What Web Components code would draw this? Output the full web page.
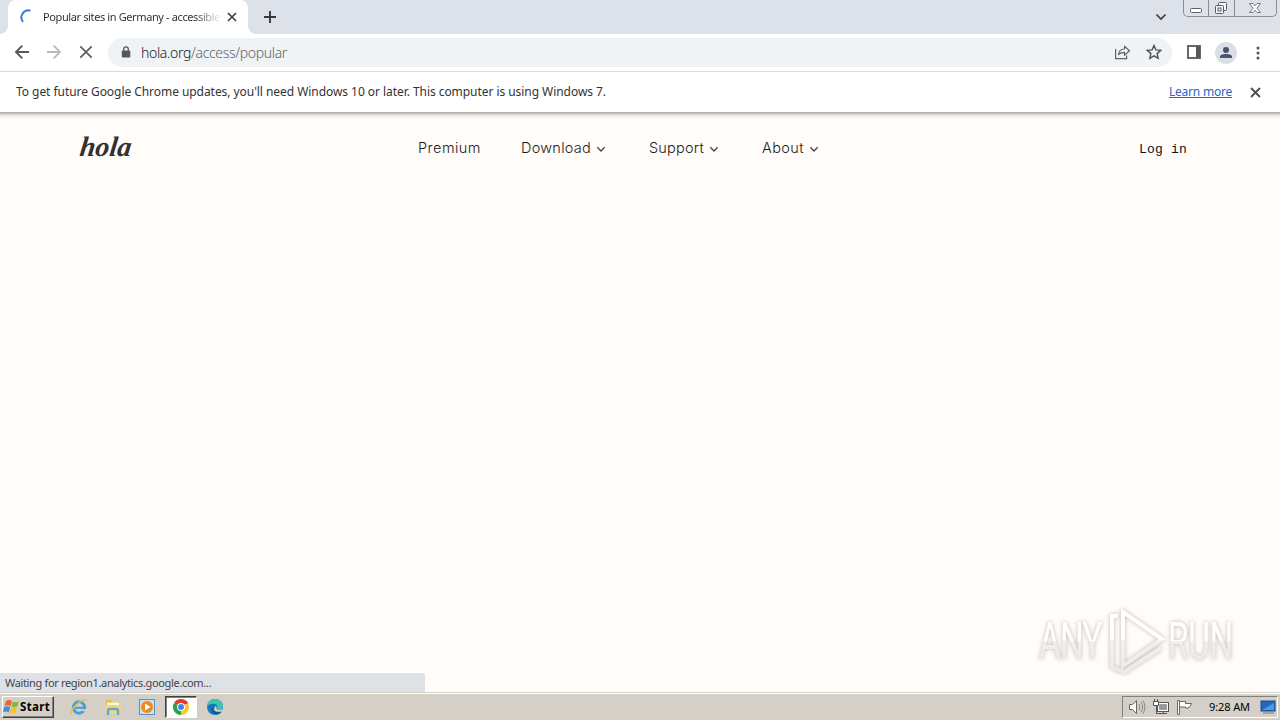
<!DOCTYPE html>
<html lang="en">
<head>
<meta charset="utf-8">
<title>Popular sites in Germany - accessible</title>
<style>
html,body{margin:0;width:1280px;height:720px;overflow:hidden}
body{font-family:"Noto Sans","Liberation Sans",sans-serif;color:#333}
</style>
</head>
<body>
<desktop-screen></desktop-screen>
<script>
const define = (name, html, after) => {
  const t = document.createElement('template');
  t.innerHTML = html;
  customElements.define(name, class extends HTMLElement {
    connectedCallback() {
      if (this.shadowRoot) return;
      this.attachShadow({mode: 'open'}).append(t.content.cloneNode(true));
      if (after) after(this, this.shadowRoot);
    }
  });
};

/* One line of text, tracked so that it fills the width given in "w". */
define('fit-text', `<style>:host{display:block;white-space:nowrap;flex:none}span{display:inline-block;white-space:pre;text-decoration:var(--line,none)}</style><span><slot></slot></span>`, (el, root) => {
  const s = root.querySelector('span');
  const target = +el.getAttribute('w');
  el.style.width = target + 'px';
  s.style.letterSpacing = (target - s.getBoundingClientRect().width) / el.textContent.length + 'px';
});

define('browser-tab', `<style>
:host{display:flex;align-items:center;box-sizing:border-box;width:240px;height:34px;background:#fff;border-radius:8px 8px 0 0;padding:0 9px 0 12px;position:relative}
:host::before,:host::after{content:"";position:absolute;bottom:0;width:8px;height:8px}
:host::before{left:-8px;background:radial-gradient(circle at 0 0,transparent 7.5px,#fff 8px)}
:host::after{right:-8px;background:radial-gradient(circle at 100% 0,transparent 7.5px,#fff 8px)}
svg{flex:none}
.title{width:177px;margin-left:7px;margin-right:7px;overflow:hidden;font-size:11px;line-height:16px;-webkit-mask:linear-gradient(90deg,#000 152px,transparent 178px)}
</style>
<svg width="16" height="16" fill="none" stroke="#3f7bd4" stroke-width="2"><path d="M10.5 1.7A7 7 0 0 0 3 12.8"/></svg>
<div class="title"><slot></slot></div>
<svg width="10" height="10" stroke="#3c4043" stroke-width="1.7"><path d="M1 1l8 8M9 1l-8 8"/></svg>`);

define('window-controls', `<style>
:host{display:flex;width:94px;height:17px;box-sizing:border-box;border:1px solid #8b8e93;border-top:0;border-radius:0 0 5px 5px;margin-right:3px}
div{border-right:1px solid #8b8e93;display:flex;justify-content:center}
div:nth-child(2){width:24px}div:nth-child(3){width:25px}div:nth-child(4){flex:1;border:0}
div:nth-child(n+3) svg{margin-right:2px}
</style>
<div><svg width="14" height="16" fill="#fff" stroke="#5d6168"><rect x="1.5" y="8.5" width="11" height="4" rx="1"/></svg></div>
<div><svg width="14" height="16" fill="#f5f6f8" stroke="#555960"><rect x="4.500" y="2.500" width="8" height="8" rx="1"/><rect x="1.500" y="5.500" width="8" height="8" rx="1"/><rect x="4" y="8" width="3" height="3"/></svg></div>
<div><svg width="14" height="16" fill="#fff" stroke="#666a70" stroke-width=".9"><path d="M1.500 3.500H5l2 2.200 2-2.200h3.500L9 8.200l3.500 4.300H9L7 10.300 5 12.500H1.500L5 8.200z"/></svg></div>`);

define('tab-strip', `<style>
:host{display:flex;height:34px;background:#dde1e9;padding-left:8px}
.plus{margin:10px 0 0 15px}.gap{flex:1}.chev{margin:13px 16px 0 0}
</style>
<browser-tab><fit-text w="177">Popular sites in Germany - accessible</fit-text></browser-tab>
<svg class="plus" width="14" height="14" stroke="#34373b" stroke-width="1.9"><path d="M7 1v12M1 7h12"/></svg>
<span class="gap"></span>
<svg class="chev" width="12" height="8" fill="none" stroke="#3c4043" stroke-width="1.7"><path d="M1.500 1.500L6 6l4.500-4.500"/></svg>
<window-controls></window-controls>`);

define('tool-bar', `<style>
:host{display:flex;height:37px;box-sizing:border-box;background:#fff;align-items:center;padding-left:14px}
svg{flex:none;display:block}
.n{margin-right:16px;position:relative;top:-.5px}
.omni{display:flex;align-items:center;width:1064px;height:29px;margin-left:-2px;box-sizing:border-box;background:#f0f3f6;border-radius:15px;padding:0 10px 0 12px}
.url{display:flex;margin-left:9px;font-size:14px;font-weight:300;color:#5f6368;line-height:20px}
.url :first-child{color:#202124}
.share{margin-left:auto;margin-right:15px}
.side{margin-left:15px}.me{width:22px;height:22px;border-radius:50%;background:#dadfe7;margin-left:14px}.more{margin-left:18px}
</style>
<svg class="n" width="16" height="16" fill="none" stroke="#55585d" stroke-width="1.9"><path d="M15 8H2M8.300 1.700L2 8l6.300 6.300"/></svg>
<svg class="n" width="16" height="16" fill="none" stroke="#b8babd" stroke-width="1.8"><path d="M1 8h13M7.700 1.700L14 8l-6.300 6.300"/></svg>
<svg class="n" width="16" height="16" stroke="#5a5d61" stroke-width="1.7"><path d="M2.300 2.300l11.400 11.400M13.700 2.300L2.300 13.700"/></svg>
<div class="omni">
<svg width="12" height="15" fill="#55585c"><rect x="1.800" y="5.500" width="8.500" height="7" rx="1"/><path d="M3.700 6.500V4.200a2.300 2.300 0 0 1 4.600 0v2.300" fill="none" stroke="#55585c" stroke-width="1.300"/></svg>
<div class="url"><fit-text w="50">hola.org</fit-text><fit-text w="96">/access/popular</fit-text></div>
<svg class="share" width="17" height="16" fill="none" stroke="#5f6368" stroke-width="1.200"><path d="M1.600 4v9.700h11V10.500"/><path d="M4.500 9.500c.4-3.500 2.500-5.400 6-5.500V1.200l5 4.600-5 4.500V7.400c-2.700 0-4.500.600-6 2.100z" stroke-linejoin="round"/></svg>
<svg width="16" height="17" fill="none" stroke="#4f5257" stroke-width="1.400"><path d="M8 1.500l1.900 4.400 4.900.5-3.700 3.200 1.100 4.700L8 11.800l-4.200 2.500 1.100-4.700L1.200 6.400l4.900-.5z"/></svg>
</div>
<svg class="side" width="14" height="15"><rect x="1" y="1" width="12" height="12" fill="none" stroke="#55585c" stroke-width="1.800"/><path d="M9 1h4v12H9z" fill="#55585c"/></svg>
<svg class="me" width="22" height="22" fill="#49536b"><circle cx="11" cy="8" r="3"/><path d="M5 16v-1.500c0-3.500 12-3.500 12 0V16z"/></svg>
<svg class="more" width="6" height="16" fill="#4f5257"><circle cx="3" cy="3" r="1.500"/><circle cx="3" cy="8" r="1.500"/><circle cx="3" cy="13" r="1.500"/></svg>`);

define('info-bar', `<style>
:host{display:flex;align-items:center;height:42px;box-sizing:border-box;background:#fff;border-top:1px solid #d9dbdd;border-bottom:1px solid #b2b2b2;padding:0 19px 1px 16px;font-size:12px;color:#333;position:relative}
:host::after{content:"";position:absolute;left:0;right:0;top:41px;height:6px;background:linear-gradient(#b5b4b2,#e7e5e2 35%,#fffcf900)}
.link{margin-left:auto;color:#2a66c4;--line:underline}
svg{margin:1px 0 0 18px}
</style>
<fit-text w="590">To get future Google Chrome updates, you'll need Windows 10 or later. This computer is using Windows 7.</fit-text>
<fit-text class="link" w="63">Learn more</fit-text>
<svg width="11" height="11" stroke="#4a4d51" stroke-width="1.800"><path d="M1 1l9 9M10 1l-9 9"/></svg>`);

define('nav-item', `<style>
:host{display:flex;align-items:center;font:300 14.5px/20px Inter,"Liberation Sans",sans-serif;color:#1c1c1c}
svg{margin:3px 0 0 5px}:host([plain]) svg{display:none}
</style><slot></slot><svg width="10" height="7" fill="none" stroke="#444" stroke-width="1.300"><path d="M1.300 1.300L5 5l3.700-3.700"/></svg>`);

define('any-run', `<style>
:host{position:absolute;left:1030px;top:485px;display:block}
svg{display:block;overflow:visible;filter:drop-shadow(0 0 2px rgba(90,82,72,.4))}
text{font:400 52px Roboto,sans-serif}
</style>
<svg width="212" height="84" viewBox="0 0 212 84">
<defs><linearGradient id="g" gradientUnits="userSpaceOnUse" x1="0" y1="14" x2="0" y2="72"><stop offset=".46" stop-color="#fff"/><stop offset=".48" stop-color="#f3f0ec"/><stop offset="1" stop-color="#eeebe7"/></linearGradient></defs>
<text transform="translate(9 61) scale(.64 1)" y="0" fill="url(#h)" textLength="99">ANY</text>
<text transform="translate(138 61) scale(.64 1)" y="0" fill="url(#h)" textLength="102">RUN</text>
<linearGradient id="h" gradientUnits="userSpaceOnUse" x1="0" y1="-37" x2="0" y2="0"><stop offset=".5" stop-color="#fff"/><stop offset=".53" stop-color="#f3f0ec"/><stop offset="1" stop-color="#eeebe7"/></linearGradient>
<path d="M93 13L132 40 93 67z M88 17H82V68L94 73 131 49" transform="translate(0 1)" fill="none" stroke="url(#g)" stroke-width="4"/>
</svg>`);

define('web-page', `<style>
:host{display:block;flex:1;background:#fffcf9;position:relative;min-height:0}
header{display:flex;align-items:center;height:69px;padding-left:80px}
.logo{font:italic bold 28px/34px "Liberation Serif",serif;color:#35302e;margin:-2px -3px 0 0;transform:skewX(-7deg)}
nav{display:flex;margin-left:285px;margin-top:1px}
nav nav-item{margin-right:40px}
nav nav-item:nth-child(2),nav nav-item:nth-child(3){margin-right:43px}
.login{font:13px/18px "Liberation Mono",monospace;color:#111;margin-left:280px;margin-top:5px}
.status{position:absolute;left:0;bottom:0;width:425px;height:19px;box-sizing:border-box;background:#dee1e6;border-radius:0 3px 0 0;padding-left:5px;font-size:11px;line-height:20px;color:#444}
</style>
<header>
<fit-text class="logo" w="56">hola</fit-text>
<nav>
<nav-item plain><fit-text w="63">Premium</fit-text></nav-item>
<nav-item><fit-text w="70">Download</fit-text></nav-item>
<nav-item><fit-text w="55">Support</fit-text></nav-item>
<nav-item><fit-text w="42">About</fit-text></nav-item>
</nav>
<fit-text class="login" w="48">Log in</fit-text>
</header>
<any-run></any-run>
<div class="status"><fit-text w="206">Waiting for region1.analytics.google.com...</fit-text></div>`);

define('task-bar', `<style>
:host{display:flex;align-items:center;height:28px;box-sizing:border-box;background:#d4d0c8;border-top:1px solid #d4d0c8;box-shadow:inset 0 1px #fff;padding:1px 2px 0;color:#000}
svg{display:block;flex:none}
.start{display:flex;align-items:center;box-sizing:border-box;width:52px;height:22px;border:1px solid;border-color:#fff #404040 #404040 #fff;box-shadow:inset -1px -1px #808080;font:bold 11.5px/16px "Noto Sans",sans-serif;padding-left:0}
.apps{display:flex;align-items:center;margin-left:15px}
.app{width:20px;height:20px;margin-right:14px;display:flex;align-items:center;justify-content:center}
.on{width:32px;height:22px;box-sizing:border-box;margin:0 8px 0 -6px;background:#fff;border:1px solid;border-color:#404040 #fff #fff #404040;box-shadow:inset 1px 1px #808080}
.tray{display:flex;align-items:center;box-sizing:border-box;width:156px;height:22px;margin-left:auto;border:1px solid;border-color:#808080 #fff #fff #808080;padding-left:5px}
.tray svg{margin-right:7px}.tray .flag{margin-right:0}.time{font-size:11px;line-height:16px;margin:0 10px 0 15px}
.tray .desk{margin:0}
</style>
<div class="start"><svg width="17" height="18" viewBox="0 0 17 18"><path d="M3 3q3-2 6 0L7.500 8.300q-3-2-6 0z" fill="#ed6634"/><path d="M9.800 3.500q3 1.800 6-.3L14.500 8.300q-3 2-6 .3z" fill="#82b83f"/><path d="M1.200 9.200q3-2 6 0L5.700 14.500q-3-2-6 0z" fill="#448fd2"/><path d="M8 9.500q3 1.800 6-.3l-1.400 5.300q-3 2-6 .3z" fill="#f6c22f"/></svg><fit-text w="30">Start</fit-text></div>
<div class="apps">
<div class="app"><svg width="18" height="18" fill="none"><circle cx="9" cy="9.500" r="5.700" stroke="#43a1dc" stroke-width="3"/><path d="M4 9.800h11" stroke="#43a1dc" stroke-width="2.200"/><path d="M12 11.200h6v2h-6z" fill="#d4d0c8"/><path d="M1.500 16.500C-1.500 13 12-1 17 2.500" stroke="#e6bd4e" stroke-width="1.500"/></svg></div>
<div class="app"><svg width="18" height="18"><path d="M2 2h5l1 2h7v10H2z" fill="#e2bb55"/><path d="M3 4.500h12v3H3z" fill="#fff7cf"/><path d="M1 7h16v8H1z" fill="#f1d67c"/><path d="M4 17v-4.500q0-1.500 1.500-1.500h7q1.500 0 1.500 1.500V17" fill="none" stroke="#5eabd5" stroke-width="2.400"/></svg></div>
<div class="app"><svg width="18" height="18"><rect x="1.500" y="1.500" width="15" height="15" fill="#c9e2f2" stroke="#5595c8"/><circle cx="9" cy="9" r="6" fill="#f08a1d"/><path d="M7 5.500l5.500 3.500L7 12.500z" fill="#fff"/></svg></div>
<div class="app on"><svg width="16" height="16" viewBox="0 0 16 16"><path d="M8 8L1.070 4A8 8 0 0 1 14.930 4z" fill="#e33b2e"/><path d="M8 8L14.930 4A8 8 0 0 1 8 16z" fill="#fcc62d"/><path d="M8 8v8A8 8 0 0 1 1.070 4z" fill="#2da04e"/><path d="M8 4h6.930" stroke="#e33b2e"/><circle cx="8" cy="8" r="4" fill="#fff"/><circle cx="8" cy="8" r="3" fill="#4285e8"/></svg></div>
<div class="app"><svg width="18" height="18" viewBox="0 0 18 18"><circle cx="9" cy="9" r="8" fill="#1675bd"/><path d="M1 9C1 4 4.500 1 9 1s8 3 8 7c0 3-3.500 4.300-6 3 1-1 .8-4.800-3-5.200C5 5.500 2.200 6.500 1 9z" fill="#42c5b0"/><path d="M7 8.500c-.8 4.500 3 7 8.500 5.500l-2.600 2C7.800 17 4 13 7 8.500z" fill="#114e92"/><path d="M9.600 8q2 1.500.8 3 3 1.500 6.400-.3l-.6 2.300q-5 2-8-.6-1-2 1.400-4.400z" fill="#d4d0c8"/></svg></div>
</div>
<div class="tray">
<svg width="18" height="18" fill="#fff" stroke="#666"><path d="M1.500 6.500h3l4-4v13l-4-4h-3z"/><path d="M11 6q2 3 0 6M13 4q3.500 5 0 10M15 2.500q4 6.500 0 13" fill="none" stroke="#888"/></svg>
<svg width="16" height="18" fill="#fff" stroke="#555"><rect x="4.500" y="4.500" width="11" height="9"/><path d="M6.500 6.500h7v5h-7z" fill="#999" stroke="#999"/><path d="M7 15.500h7M10.500 13.500v2M3.500 7.500v8h4" fill="none"/><path d="M.5 3.500h5v4h-5zM1.500 1v2.500M4.500 1v2.500"/></svg>
<svg class="flag" width="18" height="18" fill="#fff" stroke="#666"><path d="M1.500 2.500h2v14h-2zM3.500 3.500h6v2h6q-1 3.500-3.500 4.500H9.500V9h-6z"/></svg>
<fit-text class="time" w="41">9:28 AM</fit-text>
<svg class="desk" width="16" height="16"><rect x="1" y="2" width="14" height="10" fill="#2468bd" stroke="#174b8e"/><path d="M2 11L14 4v7z" fill="#4d9be2"/><path d="M3 14h11" stroke="#777"/></svg>
</div>`);

define('desktop-screen', `<style>:host{display:flex;flex-direction:column;width:1280px;height:720px;overflow:hidden}
tab-strip,tool-bar,info-bar,task-bar{flex:none}info-bar{z-index:1}</style>
<tab-strip></tab-strip><tool-bar></tool-bar><info-bar></info-bar><web-page></web-page><task-bar></task-bar>`);
</script>
</body>
</html>
